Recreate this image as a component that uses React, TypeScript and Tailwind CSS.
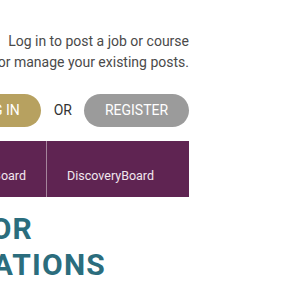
import React from "react";

export default function App() {
  return (
    <div
      className="w-[288px] h-[288px] overflow-hidden bg-white relative"
      style={{ fontFamily: "Roboto, 'Liberation Sans', sans-serif" }}
    >
      <div className="w-[189px] flex flex-col items-end">
        <p className="pt-[31px] text-[14px] leading-[21px] text-[#4a4a4a] text-right whitespace-nowrap">
          Log in to post a job or course
          <br />
          or manage your existing posts.
        </p>

        <div className="mt-[21px] flex items-center justify-end whitespace-nowrap">
          <button className="h-[33px] px-[21px] rounded-full bg-[#b7a160] text-white text-[14px] uppercase">
            Log In
          </button>
          <span className="ml-[13px] text-[14px] text-[#333]">OR</span>
          <button className="ml-[12px] h-[33px] w-[105px] rounded-full bg-[#9b9b9b] text-white text-[14px] uppercase">
            Register
          </button>
        </div>

        <div className="mt-[14px] w-full h-[56px] flex justify-end bg-[#5f2452] whitespace-nowrap">
          <div className="px-5 pt-[27px] text-[12.5px] leading-[16px] text-[#f1e6ee] border-r border-[#a5849c]">
            JobBoard
          </div>
          <div className="w-[142px] shrink-0 px-5 pt-[27px] text-[12.5px] leading-[16px] text-[#f1e6ee]">
            DiscoveryBoard
          </div>
        </div>
      </div>

      <div className="mt-[14px] text-[30px] leading-[36px] font-bold tracking-[1.2px] text-[#2b6d7d] whitespace-nowrap">
        <div className="w-[33px] flex justify-end">RESOURCES FOR</div>
        <div className="w-[106px] flex justify-end">ORGANIZATIONS</div>
      </div>
    </div>
  );
}
